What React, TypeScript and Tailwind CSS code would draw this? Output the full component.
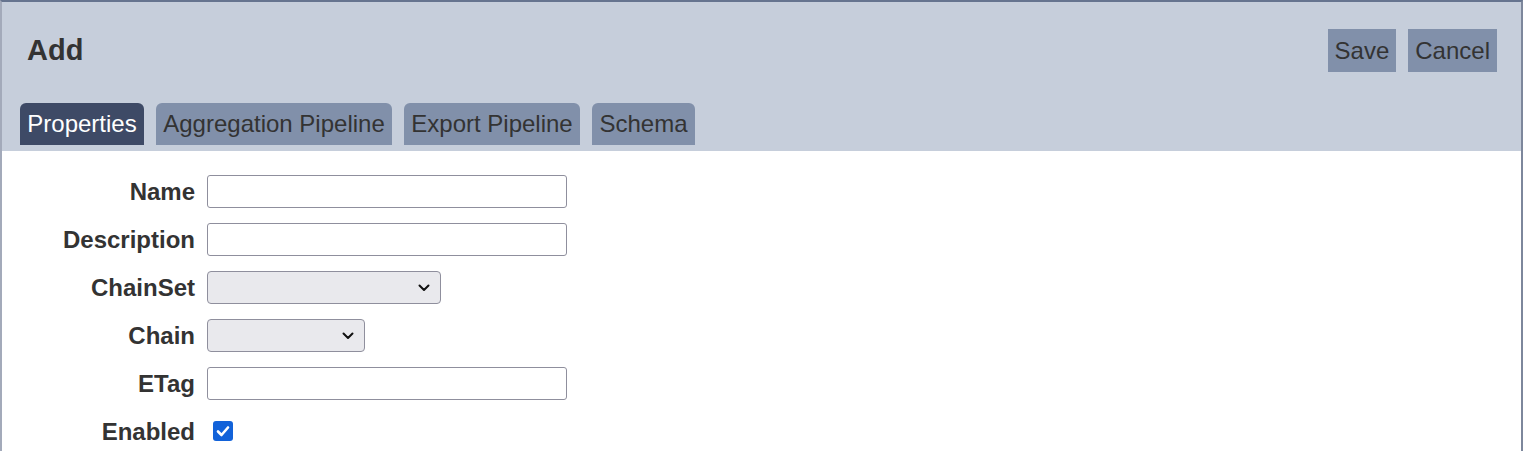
import React from "react";

const Chevron = () => (
  <svg width="12" height="8" viewBox="0 0 12 8" className="absolute right-[10px] top-1/2 -translate-y-1/2">
    <path d="M1.5 1.5 L6 6 L10.5 1.5" fill="none" stroke="#111" strokeWidth="2" strokeLinecap="round" strokeLinejoin="round" />
  </svg>
);

const Row = ({ label, children }: { label: string; children: React.ReactNode }) => (
  <div className="flex items-center h-[33px]">
    <div className="w-[193px] text-right font-bold text-[24px] text-[#333]">{label}</div>
    <div className="ml-[12px] flex items-center">{children}</div>
  </div>
);

const TextInput = () => (
  <div className="w-[360px] h-[33px] border border-[#8f8f9d] rounded-[3px] bg-white" />
);

const Select = ({ w }: { w: string }) => (
  <div className={`relative h-[33px] border border-[#8f8f9d] rounded-[4px] bg-[#e9e9ed] ${w}`}>
    <Chevron />
  </div>
);

export default function App() {
  const tabs = [
    { t: "Properties", w: "w-[124px]" },
    { t: "Aggregation Pipeline", w: "w-[236px]" },
    { t: "Export Pipeline", w: "w-[176px]" },
    { t: "Schema", w: "w-[103px]" },
  ];
  return (
    <div
      className="w-[1523px] h-[451px] overflow-hidden bg-white border-t-2 border-l-2 border-r-2 border-t-[#66748f] border-l-[#a3aaba] border-r-[#7d879c] text-[#333]"
      style={{ fontFamily: '"Liberation Sans", Arial, sans-serif' }}
    >
      <div className="bg-[#c6cedb] h-[149px] flex flex-col">
        <div className="flex items-center justify-between pt-[27px] pl-[25px] pr-[24px]">
          <div className="font-bold text-[29px] leading-[43px] text-[#333]">Add</div>
          <div className="flex gap-[12px]">
            <div className="h-[43px] px-[7px] flex items-center bg-[#8190aa] text-[24px] text-[#333]">Save</div>
            <div className="h-[43px] px-[7px] flex items-center bg-[#8190aa] text-[24px] text-[#333]">Cancel</div>
          </div>
        </div>
        <div className="flex gap-[12px] pl-[18px] mt-[31px]">
          {tabs.map((x, i) => (
            <div
              key={x.t}
              className={
                i === 0
                  ? `${x.w} h-[42px] flex items-center justify-center rounded-t-[6px] bg-[#3e4a66] text-white text-[24px]`
                  : `${x.w} h-[42px] flex items-center justify-center rounded-t-[6px] bg-[#8190aa] text-[#333] text-[24px]`
              }
            >
              {x.t}
            </div>
          ))}
        </div>
      </div>
      <div className="flex flex-col gap-[15px] pt-[24px]">
        <Row label="Name">
          <TextInput />
        </Row>
        <Row label="Description">
          <TextInput />
        </Row>
        <Row label="ChainSet">
          <Select w="w-[234px]" />
        </Row>
        <Row label="Chain">
          <Select w="w-[158px]" />
        </Row>
        <Row label="ETag">
          <TextInput />
        </Row>
        <Row label="Enabled">
          <div className="ml-[6px] -mt-[2px] w-[20px] h-[20px] rounded-[3px] bg-[#1262d9] flex items-center justify-center">
            <svg width="14" height="12" viewBox="0 0 14 12">
              <path d="M2 6.5 L5.5 10 L12 2.5" fill="none" stroke="white" strokeWidth="2.6" strokeLinecap="round" strokeLinejoin="round" />
            </svg>
          </div>
        </Row>
      </div>
    </div>
  );
}
